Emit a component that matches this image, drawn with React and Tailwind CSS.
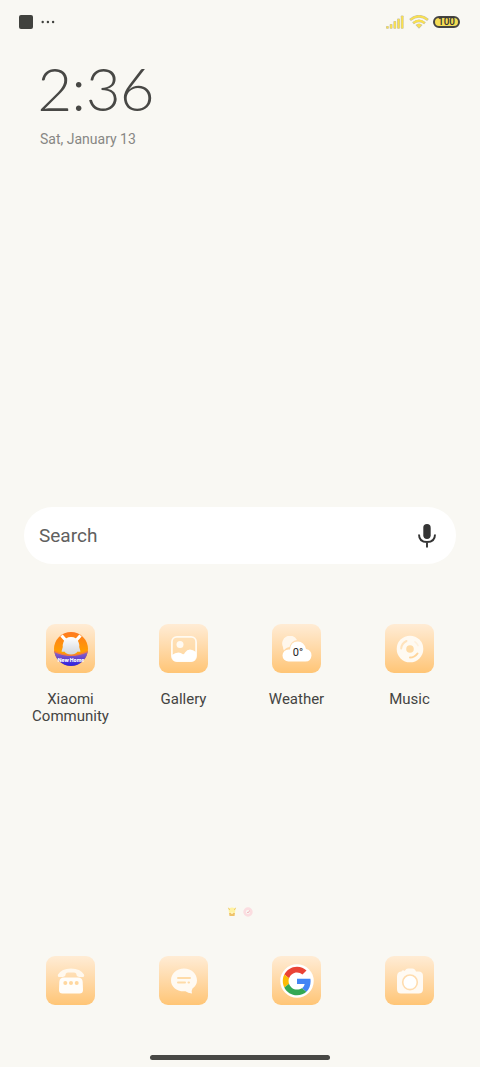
import React from "react";

function Tile({ children }) {
  return (
    <span className="flex size-[49px] items-center justify-center rounded-[9px] bg-linear-to-b from-[#ffecd5] to-[#ffc575]">
      {children}
    </span>
  );
}

function CommunityIcon() {
  return (
    <svg viewBox="0 0 34 34" className="size-[34px]" aria-hidden="true">
      <defs>
        <linearGradient id="sky" x1="0" y1="0" x2="0" y2="1">
          <stop offset="0" stopColor="#ff7a20" />
          <stop offset="0.6" stopColor="#ffa000" />
        </linearGradient>
        <linearGradient id="ground" x1="0" y1="0" x2="0" y2="1">
          <stop offset="0" stopColor="#9a68bc" />
          <stop offset="0.9" stopColor="#3426e0" />
        </linearGradient>
        <linearGradient id="bunny" x1="0" y1="0" x2="0" y2="1">
          <stop offset="0" stopColor="#ffffff" />
          <stop offset="1" stopColor="#d2d6dc" />
        </linearGradient>
        <clipPath id="disc">
          <circle cx="17" cy="17" r="17" />
        </clipPath>
      </defs>
      <g clipPath="url(#disc)">
        <rect width="34" height="34" fill="url(#sky)" />
        <path d="M0 19.500Q17 27.500 34 19.500V34H0Z" fill="url(#ground)" />
        <path d="M0 18.500Q17 26.500 34 18.500V20Q17 28 0 20Z" fill="#f47b3c" />
      </g>
      <path d="M7.500 3.500L12 8.500M26.500 3.500L22 8.500" stroke="#fff" strokeWidth="3.200" />
      <path
        d="M9.500 10Q11.500 5 17 5T24.500 10Q25.500 12.500 25.200 15L26.500 19.500Q25 20.200 23.800 19.500Q21.500 22.500 17 22.500T10.200 19.500Q9 20.200 7.500 19.500L8.800 15Q8.500 12.500 9.500 10Z"
        fill="url(#bunny)"
      />
      <text x="17" y="30" textAnchor="middle" fontFamily="Inter, sans-serif" fontSize="5" fontWeight="800" fill="#fff">
        New Home
      </text>
    </svg>
  );
}

function GalleryIcon() {
  return (
    <svg viewBox="0 0 26 26" className="size-[26px]" aria-hidden="true">
      <rect x="0.900" y="0.900" width="24.200" height="24.200" rx="5" fill="#ffdfb2" fillOpacity="0.500" stroke="#fffaf1" strokeWidth="1.800" />
      <circle cx="9" cy="8.500" r="3.500" fill="#fffaf2" />
      <path
        d="M1 19Q4 16.500 7.500 16.500Q10 16.500 11.500 18Q13 19 14 16.500Q16 13.500 19 13.500Q22 13.500 25 16V20Q25 25.500 20 25.500H6Q1 25.500 1 20Z"
        fill="#fff"
      />
    </svg>
  );
}

function WeatherIcon() {
  return (
    <svg viewBox="0 0 30 26" className="h-[26px] w-[30px]" aria-hidden="true">
      <path d="M1 11A7.500 7.500 0 0 1 15 4Q9 5 7.500 11Q3.500 11.500 2 14.500Q1 13 1 11Z" fill="#fff7ec" />
      <path
        d="M6.500 25.500A5.500 5.500 0 0 1 6.500 13.500Q7.500 13.500 8 13.600Q8.500 5.500 16 5.500Q22 5.500 24 13Q29.500 14 29.500 19.500Q29 25.500 23.500 25.500Z"
        fill="#fff"
      />
      <text x="16" y="19.500" textAnchor="middle" fontFamily="Roboto, sans-serif" fontSize="11" fill="#222">
        0°
      </text>
    </svg>
  );
}

function MusicIcon() {
  return (
    <svg viewBox="0 0 28 28" className="size-[28px]" fill="none" aria-hidden="true">
      <circle cx="14" cy="14" r="13.300" fill="#fffaf2" />
      <circle cx="14" cy="14" r="3.800" fill="#ffdba6" />
      <path d="M5.200 13.500A9 9 0 0 1 10.500 6" stroke="#ffe3bd" strokeWidth="2" strokeLinecap="round" />
      <path d="M19 6.800A9 9 0 0 1 22 10.500" stroke="#fff0dc" strokeWidth="1.600" strokeLinecap="round" />
      <path d="M14 22.500Q18.500 22.500 21.500 18.500" stroke="#ffd59b" strokeWidth="2" strokeLinecap="round" />
    </svg>
  );
}

function PhoneIcon() {
  return (
    <svg viewBox="0 0 28 26" className="h-[26px] w-[28px]" aria-hidden="true">
      <path
        d="M1 6.500Q4.500 0.500 14 0.500T27 6.500Q28 9.500 24 9Q20 9 19.500 7Q19.500 4.500 17 4.500H11Q8.500 4.500 8.500 7Q8 9 4 9Q0 9.500 1 6.500Z"
        fill="#fff8ee"
      />
      <path d="M7 9.500H21Q25.500 9.500 25.700 14L26 22Q26 25.500 22.500 25.500H5.500Q2 25.500 2 22L2.300 14Q2.500 9.500 7 9.500Z" fill="#fffdfa" />
      <g fill="#ffd79f">
        <circle cx="8.300" cy="15" r="2" />
        <circle cx="14" cy="15" r="2" />
        <circle cx="19.700" cy="15" r="2" />
      </g>
    </svg>
  );
}

function MessagesIcon() {
  return (
    <svg viewBox="0 0 28 26" className="h-[26px] w-[28px]" aria-hidden="true">
      <path
        d="M14 0.500C21.500 0.500 27 5.500 27 12.500Q27 17 22.500 20.500Q21 23 22 25.500Q18 25 15.500 23.300C7 24 1 19 1 12.500C1 5.500 6.500 0.500 14 0.500Z"
        fill="#fffaf3"
      />
      <path d="M8 10H20M8 14.500H15M18.500 14.500H19" stroke="#ffdba8" strokeWidth="2" strokeLinecap="round" />
    </svg>
  );
}

function GoogleIcon() {
  return (
    <svg viewBox="-9 -9 66 66" className="size-[34px]" aria-hidden="true">
      <circle cx="24" cy="24" r="32.500" fill="#fff" />
      <g transform="translate(24 24) scale(1.150) translate(-24 -24)">
        <path fill="#EA4335" d="M24 9.500c3.540 0 6.710 1.220 9.210 3.600l6.850-6.850C35.900 2.380 30.470 0 24 0 14.620 0 6.510 5.380 2.560 13.220l7.980 6.190C12.430 13.720 17.740 9.500 24 9.500z" />
        <path fill="#4285F4" d="M46.980 24.550c0-1.570-.15-3.090-.38-4.550H24v9.020h12.940c-.58 2.960-2.260 5.480-4.780 7.180l7.730 6c4.510-4.180 7.090-10.360 7.090-17.650z" />
        <path fill="#FBBC05" d="M10.530 28.590c-.48-1.450-.76-2.990-.76-4.590s.27-3.140.76-4.590l-7.980-6.190C.92 16.460 0 20.120 0 24c0 3.880.92 7.540 2.560 10.780l7.970-6.190z" />
        <path fill="#34A853" d="M24 48c6.480 0 11.930-2.130 15.890-5.810l-7.730-6c-2.150 1.450-4.920 2.300-8.160 2.300-6.260 0-11.570-4.220-13.470-9.910l-7.980 6.190C6.510 42.620 14.620 48 24 48z" />
      </g>
    </svg>
  );
}

function CameraIcon() {
  return (
    <svg viewBox="0 0 28 26" className="h-[26px] w-[28px]" fill="none" aria-hidden="true">
      <path
        d="M5.500 3.500Q7 1.500 8.500 3L9 2.500Q10 0.500 12 0.500H16.500Q18.500 0.500 19.500 2.500L20 3.500H22.500Q27 3.500 27 8V21Q27 25.500 22.500 25.500H5Q1 25.500 1 21V8Q1 5.500 3 4Z"
        fill="#fffaf3"
      />
      <circle cx="14" cy="14.300" r="7.300" stroke="#ffdcae" strokeWidth="1.600" fill="#fff" />
    </svg>
  );
}

function AppLink({ label, icon }) {
  return (
    <a href="#" className="flex flex-col items-center gap-[18px] text-center text-[15px] leading-[17px] text-[#444442]">
      <Tile>{icon}</Tile>
      <span className="w-20">{label}</span>
    </a>
  );
}

const apps = [
  { label: "Xiaomi Community", icon: <CommunityIcon /> },
  { label: "Gallery", icon: <GalleryIcon /> },
  { label: "Weather", icon: <WeatherIcon /> },
  { label: "Music", icon: <MusicIcon /> },
];

const dock = [
  { label: "Phone", icon: <PhoneIcon /> },
  { label: "Messages", icon: <MessagesIcon /> },
  { label: "Google", icon: <GoogleIcon /> },
  { label: "Camera", icon: <CameraIcon /> },
];

function StatusBar() {
  return (
    <header className="flex h-[43px] items-center justify-between pr-5 pl-[19px]">
      <div className="flex items-center gap-2">
        <span className="size-[14px] rounded-[2px] bg-[#41423e]" />
        <svg viewBox="0 0 14 4" className="h-1 w-[14px]" fill="#41423e" aria-hidden="true">
          <circle cx="1.700" cy="2" r="1.200" />
          <circle cx="6.900" cy="2" r="1.200" />
          <circle cx="12.100" cy="2" r="1.200" />
        </svg>
      </div>
      <div className="flex items-center gap-1">
        <svg viewBox="0 0 20 14" className="h-[14px] w-5" aria-hidden="true">
          <g fill="#c6c0a2">
            <rect x="1" y="11" width="2.800" height="2.800" rx="0.800" />
            <rect x="4.700" y="9" width="2.800" height="4.800" rx="0.800" />
            <rect x="8.400" y="6" width="2.800" height="7.800" rx="0.800" />
            <rect x="12.100" y="3.500" width="2.800" height="10.300" rx="0.800" />
            <rect x="15.800" y="0.500" width="2.800" height="13.300" rx="0.800" />
          </g>
          <g fill="#fbe14c">
            <rect x="1.600" y="11.500" width="1.700" height="1.800" />
            <rect x="5.300" y="9.500" width="1.700" height="3.800" />
            <rect x="9" y="6.500" width="1.700" height="6.800" />
            <rect x="12.700" y="4" width="1.700" height="9.300" />
            <rect x="16.400" y="1" width="1.700" height="12.300" />
          </g>
        </svg>
        <svg viewBox="0 0 20 14" className="h-[14px] w-5" fill="none" aria-hidden="true">
          <g stroke="#c6c0a2" strokeWidth="2.700">
            <path d="M1 5Q10-2.500 19 5M4 8.300Q10 3.300 16 8.300" />
          </g>
          <path d="M6.500 10Q10 7 13.500 10L10 13.800Z" fill="#c6c0a2" />
          <g stroke="#fbe14c" strokeWidth="1.700">
            <path d="M1.500 4.700Q10-2.200 18.500 4.700M4.500 8Q10 3.500 15.500 8" />
          </g>
          <path d="M7.400 10.100Q10 8 12.600 10.100L10 12.800Z" fill="#fbe14c" />
        </svg>
        <span className="flex h-3 w-[27px] items-center justify-center rounded-full border-2 border-[#454442] bg-[#f5dd55] text-[10px] leading-none font-medium text-[#383733]">
          100
        </span>
      </div>
    </header>
  );
}

export default function App() {
  return (
    <main className="flex min-h-screen flex-col bg-[#f9f8f3] font-[Roboto,sans-serif]">
      <StatusBar />
      <section className="px-[38px] pt-3 text-[#484845]">
        <h1 className="font-[Lato,sans-serif] text-[60px] leading-[66px] font-light proportional-nums">2:36</h1>
        <p className="px-[2px] pt-2 text-[14px] leading-5 text-[#878784]">Sat, January 13</p>
      </section>
      <div className="flex-1" />
      <form className="mx-6 flex h-[57px] items-center rounded-full bg-white pr-[19px] pl-[15px]">
        <input
          type="text"
          aria-label="Search"
          placeholder="Search"
          className="min-w-0 flex-1 bg-transparent text-[19px] leading-6 text-[#60605e] outline-none placeholder:text-[#60605e]"
        />
        <button type="button" aria-label="Voice search">
          <svg viewBox="0 0 20 26" className="h-[26px] w-5" aria-hidden="true">
            <rect x="6.300" y="1" width="7.400" height="15" rx="3.700" fill="#343434" />
            <path d="M2 11.500Q2 19 10 19T18 11.500M10 19V24.500" fill="none" stroke="#343434" strokeWidth="1.900" />
          </svg>
        </button>
      </form>
      <nav aria-label="Apps" className="grid grid-cols-4 px-[14px] pt-[60px]">
        {apps.map((a) => (
          <AppLink key={a.label} {...a} />
        ))}
      </nav>
      <div className="flex justify-center gap-[6px] pt-[182px]">
        <svg viewBox="0 0 10 10" className="size-[10px]" aria-hidden="true">
          <circle cx="5" cy="3.800" r="3.300" fill="#fff2a3" />
          <path d="M1.500 0.800L2.500 3M8.500 0.800L7.500 3" stroke="#eec958" strokeWidth="1" />
          <path d="M2 6H8L7.500 9H2.500Z" fill="#efc36b" />
          <circle cx="5" cy="6" r="1" fill="#fff7c7" />
        </svg>
        <svg viewBox="0 0 10 10" className="size-[10px]" aria-hidden="true">
          <circle cx="5" cy="5" r="3.400" fill="none" stroke="#fbdde0" strokeWidth="2.600" />
          <path d="M4 5.500Q6.500 6 6.500 3.500" fill="none" stroke="#efafb8" strokeWidth="0.900" />
        </svg>
      </div>
      <nav aria-label="Dock" className="grid grid-cols-4 justify-items-center px-[14px] pt-[39px]">
        {dock.map((d) => (
          <a key={d.label} href="#" aria-label={d.label}>
            <Tile>{d.icon}</Tile>
          </a>
        ))}
      </nav>
      <div className="flex justify-center pt-[50px] pb-[7px]">
        <span className="h-[5px] w-[180px] rounded-full bg-[#484845]" />
      </div>
    </main>
  );
}
